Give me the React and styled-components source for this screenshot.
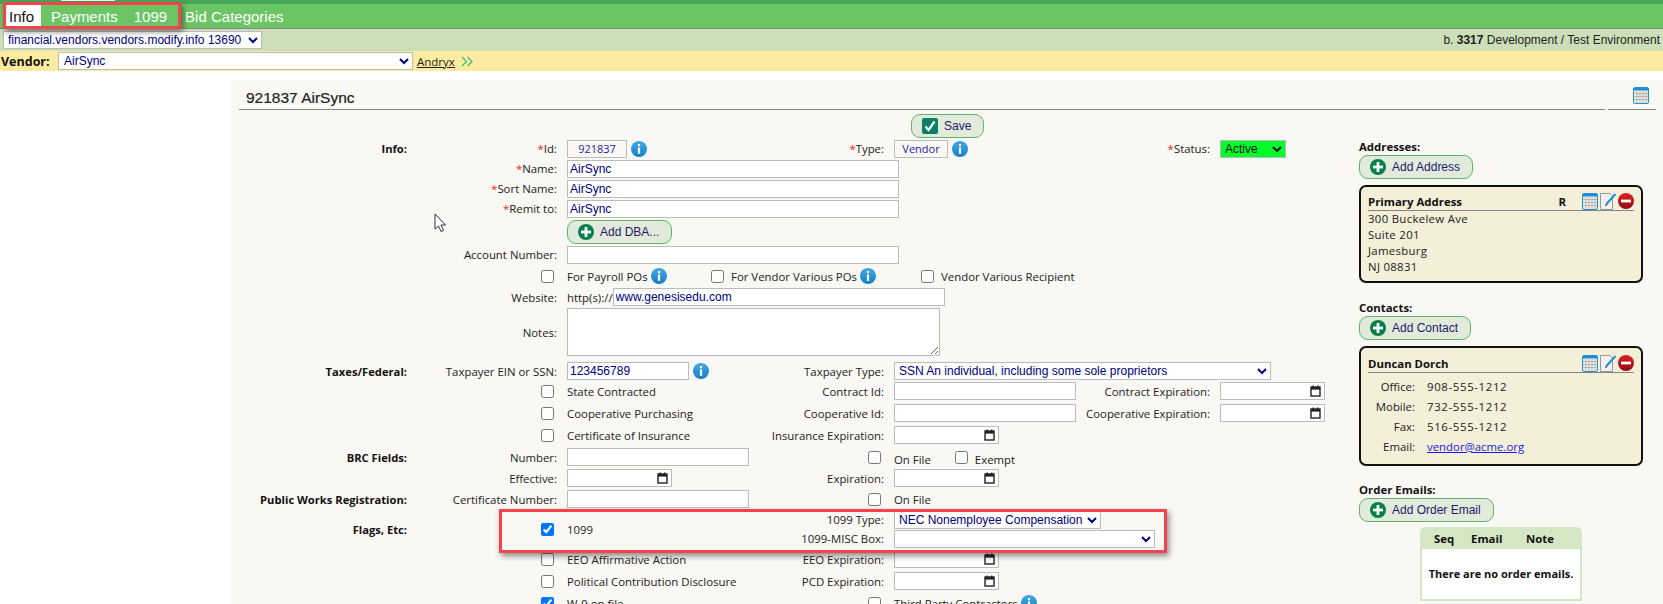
import React from 'react'
import styled, { createGlobalStyle } from 'styled-components'

const Global = createGlobalStyle`
  html, body { margin: 0; padding: 0; height: 100%; overflow: hidden; background: #fff; }
  body { font-family: "Open Sans", "Liberation Sans", sans-serif; font-size: 11.4px; color: #222; }
  * { box-sizing: border-box; }
`

const Page = styled.div`
  position: relative;
  width: 1663px;
  height: 604px;
  overflow: hidden;
`

const TopStrip = styled.div`
  height: 4px;
  background: #46a758;
`

const Menu = styled.div`
  height: 25px;
  background: #6cc564;
  border-bottom: 1px solid #858585;
  display: flex;
  align-items: stretch;
  padding: 1px 0 0 5px;
  font-family: "Liberation Sans", Arial, sans-serif;
  font-size: 15px;
`

const MenuItem = styled.div`
  display: flex;
  align-items: center;
  color: ${p => (p.$active ? '#111' : '#fff')};
  background: ${p => (p.$active ? '#fff' : 'transparent')};
  padding: 0 ${p => p.$pr || 4}px 0 4px;
  margin-right: ${p => p.$mr || 0}px;
`

const BuildBar = styled.div`
  height: 22px;
  background: #ccdfb9;
  display: flex;
  align-items: center;
  justify-content: space-between;
  padding: 0 3px;
`

const Build = styled.div`
  font-family: "Liberation Sans", Arial, sans-serif;
  font-size: 12px;
  color: #222;
`

const VendorBar = styled.div`
  height: 20px;
  background: #fdeca0;
  display: flex;
  align-items: center;
  padding-left: 1px;
`

const VendorLabel = styled.div`
  font-weight: 700;
  font-size: 12.5px;
  color: #111;
  width: 57px;
  flex: none;
`

const VendorLink = styled.a`
  color: #222;
  text-decoration: underline;
  font-size: 11.5px;
  margin: 0 6px 0 4px;
`

const Panel = styled.div`
  margin: 9px 0 0 231px;
  background: #f9f8f4;
  height: 540px;
  padding: 0 7px 0 8px;
`

const TitleRow = styled.div`
  display: flex;
  align-items: flex-end;
  height: 30px;
  gap: 3px;
`

const Title = styled.div`
  flex: 1;
  height: 100%;
  font-family: "Liberation Sans", Arial, sans-serif;
  font-size: 15.5px;
  color: #222;
  -webkit-text-stroke: 0.2px #222;
  border-bottom: 1px solid #858585;
  padding: 8px 0 0 7px;
  line-height: 20px;
`

const TitleSide = styled.div`
  width: 48px;
  height: 100%;
  border-bottom: 1px solid #858585;
  padding: 7px 0 0 25px;
`

const Body = styled.div`
  display: flex;
`

const Form = styled.div`
  width: 1120px;
  padding-top: 3px;
  flex: none;
`

const Row = styled.div`
  display: grid;
  grid-template-columns: 168px 140px 182px 125px 182px 124px 105px;
  grid-template-rows: ${p => p.$rows || 'auto'};
  column-gap: 10px;
  align-items: center;
  height: ${p => p.$h}px;
  margin-top: ${p => p.$mt || 0}px;
`

const Group = styled.div`
  grid-column: 1;
  grid-row: ${p => p.$span || 'auto'};
  text-align: right;
  font-size: 11.2px;
  font-weight: 700;
  color: #111;
  white-space: nowrap;
  padding-bottom: ${p => (p.$up ? 2 : 0)}px;
`

const Label = styled.div`
  grid-column: ${p => p.$col || 2};
  grid-row: ${p => p.$span || 'auto'};
  text-align: right;
  white-space: nowrap;
  color: #222;
  padding-bottom: ${p => (p.$up ? 2 : 0)}px;
`

const Req = styled.span`
  color: #f01c1c;
`

const Cell = styled.div`
  grid-column: ${p => p.$col || 3} / ${p => p.$end || 'span 1'};
  grid-row: ${p => p.$span || 'auto'};
  display: flex;
  align-items: center;
  white-space: nowrap;
  gap: ${p => p.$gap || 0}px;
`

const Txt = styled.span`
  flex: none;
  margin-left: ${p => p.$ml || 0}px;
  margin-top: ${p => p.$mt || 0}px;
`

const OptionGroup = styled.div`
  flex: none;
  width: ${p => p.$w}px;
  display: flex;
  align-items: center;
  gap: ${p => p.$gap || 3}px;
`

const TextInput = styled.input`
  width: ${p => p.$w}px;
  height: 18px;
  flex: none;
  border: 1px solid #bbb;
  background: #fff;
  padding: 0 2px;
  margin: 0;
  font-family: "Liberation Sans", Arial, sans-serif;
  font-size: 12px;
  color: #000080;
  outline: none;
`

const ReadBox = styled.div`
  width: ${p => p.$w}px;
  height: 18px;
  flex: none;
  border: 1px solid #bbb;
  text-align: center;
  line-height: 16px;
  color: #2a1ba8;
  font-size: 11px;
  margin-right: 4px;
`

const Notes = styled.textarea`
  width: 373px;
  height: 48px;
  flex: none;
  border: 1px solid #bbb;
  background: #fff;
  margin: 0;
  display: block;
`

const Picker = styled.select`
  width: ${p => p.$w}px;
  height: 18px;
  flex: none;
  border: 1px solid #bbb;
  border-radius: 0;
  background: ${p => p.$bg || '#fff'};
  color: ${p => p.$color || '#000080'};
  font-family: "Liberation Sans", Arial, sans-serif;
  font-size: 12px;
  padding: 0 0 0 ${p => p.$pl || 0}px;
  margin: 0;
`

const DateBox = styled.div`
  width: ${p => p.$w || 105}px;
  height: 18px;
  flex: none;
  border: 1px solid #bbb;
  background: #fff;
  display: flex;
  align-items: center;
  justify-content: flex-end;
  padding-right: 3px;
`

const Check = styled.input.attrs({ type: 'checkbox' })`
  width: 13px;
  height: 13px;
  margin: 0 0 0 ${p => p.$ml || 0}px;
  flex: none;
`

const CheckCell = styled.div`
  grid-column: ${p => p.$col || 2};
  grid-row: ${p => p.$span || 'auto'};
  display: flex;
  justify-content: flex-end;
  padding-right: 3px;
`

const Btn = styled.div`
  display: flex;
  align-items: center;
  height: 24px;
  width: ${p => p.$w}px;
  flex: none;
  border: 1px solid #5cb568;
  border-radius: 9px;
  background: #e2ebdb;
  color: #1d1a6b;
  font-family: "Liberation Sans", Arial, sans-serif;
  font-size: 12px;
  padding-left: ${p => p.$pl || 10}px;
  gap: 6px;
`

const SaveRow = styled.div`
  height: 26px;
  padding: 1px 0 0 672px;
`

const Side = styled.div`
  width: 285px;
  flex: none;
  padding-top: 29px;
`

const SideHead = styled.div`
  font-weight: 700;
  color: #111;
  line-height: 16px;
  margin-top: ${p => p.$mt || 0}px;
`

const Card = styled.div`
  width: 284px;
  margin-top: 6px;
  border: 2px solid #111;
  border-radius: 7px;
  background: #f4efd8;
  padding: ${p => p.$pt}px 7px 0;
  height: ${p => p.$h}px;
`

const CardHead = styled.div`
  display: flex;
  align-items: center;
  border-bottom: 1px solid #858585;
  height: 18px;
  font-weight: 700;
  color: #111;
`

const CardName = styled.div`
  flex: 1;
`

const Rank = styled.div`
  margin-right: 16px;
`

const CardIcons = styled.div`
  display: flex;
  gap: 2px;
`

const AddressLine = styled.div`
  line-height: 16px;
  color: #222;
  letter-spacing: 0.3px;
`

const Lines = styled.div`
  padding-top: ${p => p.$pt || 0}px;
`

const ContactRow = styled.div`
  display: grid;
  grid-template-columns: 47px 1fr;
  column-gap: 12px;
  height: 20px;
  align-items: center;
`

const ContactLabel = styled.div`
  text-align: right;
`

const Phone = styled.div`
  letter-spacing: 0.65px;
`

const Mail = styled.a`
  color: #1a1ae6;
  text-decoration: underline;
`

const EmailTable = styled.div`
  width: 162px;
  margin: 5px 0 0 61px;
  border: 2px solid #d5e6c5;
  border-top: none;
  border-radius: 6px 6px 0 0;
  height: 74px;
  background: #fff;
`

const EmailHead = styled.div`
  height: 22px;
  margin: 0 -2px;
  background: #d5e6c5;
  border-radius: 6px 6px 0 0;
  display: flex;
  align-items: center;
  font-weight: 700;
  color: #111;
  padding-left: 14px;
`

const EmailCol = styled.div`
  width: ${p => p.$w}px;
  flex: none;
`

const EmailEmpty = styled.div`
  text-align: center;
  font-size: 11px;
  font-weight: 700;
  color: #111;
  padding-top: 17px;
  white-space: nowrap;
`

const RedBox = styled.div`
  position: absolute;
  left: ${p => p.$x}px;
  top: ${p => p.$y}px;
  width: ${p => p.$w}px;
  height: ${p => p.$h}px;
  border: 3px solid #f5424f;
  box-shadow: 2px 3px 6px rgba(0, 0, 0, 0.45);
`

const Cursor = styled.svg`
  position: absolute;
  left: 434px;
  top: 213px;
`

const TopMark = styled.div`
  position: absolute;
  left: 61px;
  top: 0;
  width: 54px;
  height: 1px;
  background: #fff;
`

const Glyph = styled.svg`
  flex: none;
  display: block;
`

const Info = () => (
  <Glyph width="16" height="16" viewBox="0 0 16 16">
    <defs>
      <linearGradient id="infoG" x1="0" y1="0" x2="0" y2="1">
        <stop offset="0" stopColor="#45a8e6" />
        <stop offset="1" stopColor="#1380c4" />
      </linearGradient>
    </defs>
    <circle cx="8" cy="8" r="8" fill="url(#infoG)" />
    <rect x="6.9" y="3" width="2.2" height="2.2" fill="#fff" />
    <rect x="6.9" y="6.4" width="2.2" height="6.4" fill="#fff" />
  </Glyph>
)

const Plus = () => (
  <Glyph width="16" height="16" viewBox="0 0 16 16">
    <circle cx="8" cy="8" r="8" fill="#067f48" />
    <rect x="6.6" y="3" width="2.8" height="10" fill="#fff" />
    <rect x="3" y="6.6" width="10" height="2.8" fill="#fff" />
  </Glyph>
)

const SaveMark = () => (
  <Glyph width="16" height="16" viewBox="0 0 16 16">
    <rect width="16" height="16" rx="2" fill="#0b7f68" />
    <path d="M3.5 8.5 L6.6 12 L12.5 3.5" fill="none" stroke="#fff" strokeWidth="2.2" />
  </Glyph>
)

const Grid = () => (
  <Glyph width="16" height="17" viewBox="0 0 16 17">
    <rect x="0.5" y="0.5" width="15" height="16" rx="1.5" fill="#f2efe4" stroke="#1e8fd6" />
    <rect x="1" y="1" width="14" height="2.5" fill="#1e8fd6" />
    <path d="M4 4v12M7 4v12M10 4v12M13 4v12M1 6.5h14M1 9.5h14M1 12.5h14" stroke="#aaa" strokeWidth="0.8" />
  </Glyph>
)

const Pencil = () => (
  <Glyph width="16" height="17" viewBox="0 0 16 17">
    <path d="M0.5 0.5 H10 L12.5 3 V16.5 H0.5 Z" fill="#eef0f2" stroke="#999" />
    <path d="M15.5 1 L6.5 11" stroke="#1e8fd6" strokeWidth="2" />
    <path d="M6 10.5 L5 13 L7.5 12 Z" fill="#333" />
  </Glyph>
)

const Minus = () => (
  <Glyph width="16" height="16" viewBox="0 0 16 16">
    <defs>
      <linearGradient id="minusG" x1="0" y1="0" x2="0" y2="1">
        <stop offset="0" stopColor="#e01f26" />
        <stop offset="1" stopColor="#8e0d12" />
      </linearGradient>
    </defs>
    <circle cx="8" cy="8" r="8" fill="url(#minusG)" />
    <rect x="3" y="6.6" width="10" height="2.8" fill="#fff" />
  </Glyph>
)

const Cal = () => (
  <Glyph width="11" height="12" viewBox="0 0 11 12">
    <rect x="1" y="2" width="9" height="9" fill="none" stroke="#222" strokeWidth="1.4" />
    <rect x="1" y="2" width="9" height="2.6" fill="#222" />
    <rect x="2.5" y="0.5" width="1.4" height="2" fill="#222" />
    <rect x="7" y="0.5" width="1.4" height="2" fill="#222" />
  </Glyph>
)

const Chevrons = () => (
  <Glyph width="13" height="11" viewBox="0 0 13 11">
    <path d="M1 1 L5.5 5.5 L1 10 M6.5 1 L11 5.5 L6.5 10" fill="none" stroke="#3dbb86" strokeWidth="1.3" />
  </Glyph>
)

const App = () => {
  return (
    <Page>
      <Global />
      <TopStrip />
      <Menu>
        <MenuItem $active $pr={7} $mr={6}>Info</MenuItem>
        <MenuItem $mr={8}>Payments</MenuItem>
        <MenuItem $mr={10}>1099</MenuItem>
        <MenuItem>Bid Categories</MenuItem>
      </Menu>
      <BuildBar>
        <Picker $w={259} defaultValue="a">
          <option value="a">financial.vendors.vendors.modify.info 13690</option>
        </Picker>
        <Build>b. <b>3317</b> Development / Test Environment</Build>
      </BuildBar>
      <VendorBar>
        <VendorLabel>Vendor:</VendorLabel>
        <Picker $w={355} $pl={1} defaultValue="a">
          <option value="a">AirSync</option>
        </Picker>
        <VendorLink>Andryx</VendorLink>
        <Chevrons />
      </VendorBar>

      <Panel>
        <TitleRow>
          <Title>921837 AirSync</Title>
          <TitleSide><Grid /></TitleSide>
        </TitleRow>
        <Body>
          <Form>
            <SaveRow>
              <Btn $w={73}><SaveMark />Save</Btn>
            </SaveRow>
            <Row $h={20}>
              <Group $up>Info:</Group>
              <Label $up><Req>*</Req>Id:</Label>
              <Cell><ReadBox $w={60}>921837</ReadBox><Info /></Cell>
              <Label $up $col={4}><Req>*</Req>Type:</Label>
              <Cell $col={5}><ReadBox $w={54}>Vendor</ReadBox><Info /></Cell>
              <Label $up $col={6}><Req>*</Req>Status:</Label>
              <Cell $col={7}>
                <Picker $w={66} $bg="#00ff2a" $color="#111" defaultValue="a">
                  <option value="a">Active</option>
                </Picker>
              </Cell>
            </Row>
            <Row $h={20}>
              <Label $up><Req>*</Req>Name:</Label>
              <Cell><TextInput $w={332} readOnly value="AirSync" /></Cell>
            </Row>
            <Row $h={20}>
              <Label $up><Req>*</Req>Sort Name:</Label>
              <Cell><TextInput $w={332} readOnly value="AirSync" /></Cell>
            </Row>
            <Row $h={20}>
              <Label $up><Req>*</Req>Remit to:</Label>
              <Cell><TextInput $w={332} readOnly value="AirSync" /></Cell>
            </Row>
            <Row $h={26}>
              <Cell><Btn $w={105}><Plus />Add DBA...</Btn></Cell>
            </Row>
            <Row $h={20}>
              <Label $up>Account Number:</Label>
              <Cell><TextInput $w={332} readOnly value="" /></Cell>
            </Row>
            <Row $h={22}>
              <CheckCell><Check /></CheckCell>
              <Cell $end="span 5">
                <OptionGroup $w={144}>For Payroll POs<Info /></OptionGroup>
                <OptionGroup $w={210}>
                  <Check />
                  <Txt $ml={4}>For Vendor Various POs</Txt>
                  <Info />
                </OptionGroup>
                <OptionGroup $w={170}>
                  <Check />
                  <Txt $ml={4}>Vendor Various Recipient</Txt>
                </OptionGroup>
              </Cell>
            </Row>
            <Row $h={20}>
              <Label>Website:</Label>
              <Cell $end="span 3">http(s)://<TextInput $w={332} readOnly value="www.genesisedu.com" /></Cell>
            </Row>
            <Row $h={50}>
              <Label>Notes:</Label>
              <Cell $end="span 3"><Notes /></Cell>
            </Row>
            <Row $h={18} $mt={5}>
              <Group>Taxes/Federal:</Group>
              <Label>Taxpayer EIN or SSN:</Label>
              <Cell $gap={4}><TextInput $w={122} readOnly value="123456789" /><Info /></Cell>
              <Label $col={4}>Taxpayer Type:</Label>
              <Cell $col={5} $end="span 3">
                <Picker $w={377} defaultValue="a"><option value="a">SSN An individual, including some sole proprietors</option></Picker>
              </Cell>
            </Row>
            <Row $h={22}>
              <CheckCell><Check /></CheckCell>
              <Cell>State Contracted</Cell>
              <Label $col={4}>Contract Id:</Label>
              <Cell $col={5}><TextInput $w={182} readOnly value="" /></Cell>
              <Label $col={6}>Contract Expiration:</Label>
              <Cell $col={7}><DateBox><Cal /></DateBox></Cell>
            </Row>
            <Row $h={22}>
              <CheckCell><Check /></CheckCell>
              <Cell>Cooperative Purchasing</Cell>
              <Label $col={4}>Cooperative Id:</Label>
              <Cell $col={5}><TextInput $w={182} readOnly value="" /></Cell>
              <Label $col={6}>Cooperative Expiration:</Label>
              <Cell $col={7}><DateBox><Cal /></DateBox></Cell>
            </Row>
            <Row $h={22}>
              <CheckCell><Check /></CheckCell>
              <Cell>Certificate of Insurance</Cell>
              <Label $col={4}>Insurance Expiration:</Label>
              <Cell $col={5}><DateBox><Cal /></DateBox></Cell>
            </Row>
            <Row $h={22}>
              <Group>BRC Fields:</Group>
              <Label>Number:</Label>
              <Cell><TextInput $w={182} readOnly value="" /></Cell>
              <CheckCell $col={4}><Check /></CheckCell>
              <Cell $col={5}>
                <Txt $mt={4}>On File</Txt>
                <Check $ml={24} />
                <Txt $ml={7} $mt={4}>Exempt</Txt>
              </Cell>
            </Row>
            <Row $h={20}>
              <Label>Effective:</Label>
              <Cell><DateBox><Cal /></DateBox></Cell>
              <Label $col={4}>Expiration:</Label>
              <Cell $col={5}><DateBox><Cal /></DateBox></Cell>
            </Row>
            <Row $h={22}>
              <Group>Public Works Registration:</Group>
              <Label>Certificate Number:</Label>
              <Cell><TextInput $w={182} readOnly value="" /></Cell>
              <CheckCell $col={4}><Check /></CheckCell>
              <Cell $col={5}>On File</Cell>
            </Row>
            <Row $h={38} $rows="19px 19px">
              <Group $span="1 / 3">Flags, Etc:</Group>
              <CheckCell $span="1 / 3"><Check defaultChecked /></CheckCell>
              <Cell $span="1 / 3">1099</Cell>
              <Label $col={4}>1099 Type:</Label>
              <Cell $col={5} $end="span 3">
                <Picker $w={207} defaultValue="a"><option value="a">NEC Nonemployee Compensation</option></Picker>
              </Cell>
              <Label $col={4}>1099-MISC Box:</Label>
              <Cell $col={5} $end="span 3">
                <Picker $w={261} defaultValue="a"><option value="a"></option></Picker>
              </Cell>
            </Row>
            <Row $h={22}>
              <CheckCell><Check /></CheckCell>
              <Cell>EEO Affirmative Action</Cell>
              <Label $col={4}>EEO Expiration:</Label>
              <Cell $col={5}><DateBox><Cal /></DateBox></Cell>
            </Row>
            <Row $h={22}>
              <CheckCell><Check /></CheckCell>
              <Cell>Political Contribution Disclosure</Cell>
              <Label $col={4}>PCD Expiration:</Label>
              <Cell $col={5}><DateBox><Cal /></DateBox></Cell>
            </Row>
            <Row $h={22}>
              <CheckCell><Check defaultChecked /></CheckCell>
              <Cell>W-9 on file</Cell>
              <CheckCell $col={4}><Check /></CheckCell>
              <Cell $col={5} $gap={3}>Third Party Contractors<Info /></Cell>
            </Row>
          </Form>

          <Side>
            <SideHead>Addresses:</SideHead>
            <Btn $w={114}><Plus />Add Address</Btn>
            <Card $pt={6} $h={98}>
              <CardHead>
                <CardName>Primary Address</CardName>
                <Rank>R</Rank>
                <CardIcons><Grid /><Pencil /><Minus /></CardIcons>
              </CardHead>
              <Lines>
                <AddressLine>300 Buckelew Ave</AddressLine>
                <AddressLine>Suite 201</AddressLine>
                <AddressLine>Jamesburg</AddressLine>
                <AddressLine>NJ 08831</AddressLine>
              </Lines>
            </Card>
            <SideHead $mt={17}>Contacts:</SideHead>
            <Btn $w={112}><Plus />Add Contact</Btn>
            <Card $pt={7} $h={120}>
              <CardHead>
                <CardName>Duncan Dorch</CardName>
                <CardIcons><Grid /><Pencil /><Minus /></CardIcons>
              </CardHead>
              <Lines $pt={3}>
                <ContactRow><ContactLabel>Office:</ContactLabel><Phone>908-555-1212</Phone></ContactRow>
                <ContactRow><ContactLabel>Mobile:</ContactLabel><Phone>732-555-1212</Phone></ContactRow>
                <ContactRow><ContactLabel>Fax:</ContactLabel><Phone>516-555-1212</Phone></ContactRow>
                <ContactRow><ContactLabel>Email:</ContactLabel><Mail>vendor@acme.org</Mail></ContactRow>
              </Lines>
            </Card>
            <SideHead $mt={16}>Order Emails:</SideHead>
            <Btn $w={135}><Plus />Add Order Email</Btn>
            <EmailTable>
              <EmailHead>
                <EmailCol $w={37}>Seq</EmailCol>
                <EmailCol $w={55}>Email</EmailCol>
                <EmailCol $w={40}>Note</EmailCol>
              </EmailHead>
              <EmailEmpty>There are no order emails.</EmailEmpty>
            </EmailTable>
          </Side>
        </Body>
      </Panel>

      <TopMark />
      <RedBox $x={3} $y={2} $w={178} $h={27} />
      <RedBox $x={499} $y={509} $w={668} $h={44} />
      <Cursor width="13" height="20" viewBox="0 0 13 20">
        <path d="M1 1 L1 16 L4.5 13 L7 18.5 L9.5 17.5 L7 12 L11.5 12 Z" fill="#fff" stroke="#333" strokeWidth="1" />
      </Cursor>
    </Page>
  )
}

export default App
